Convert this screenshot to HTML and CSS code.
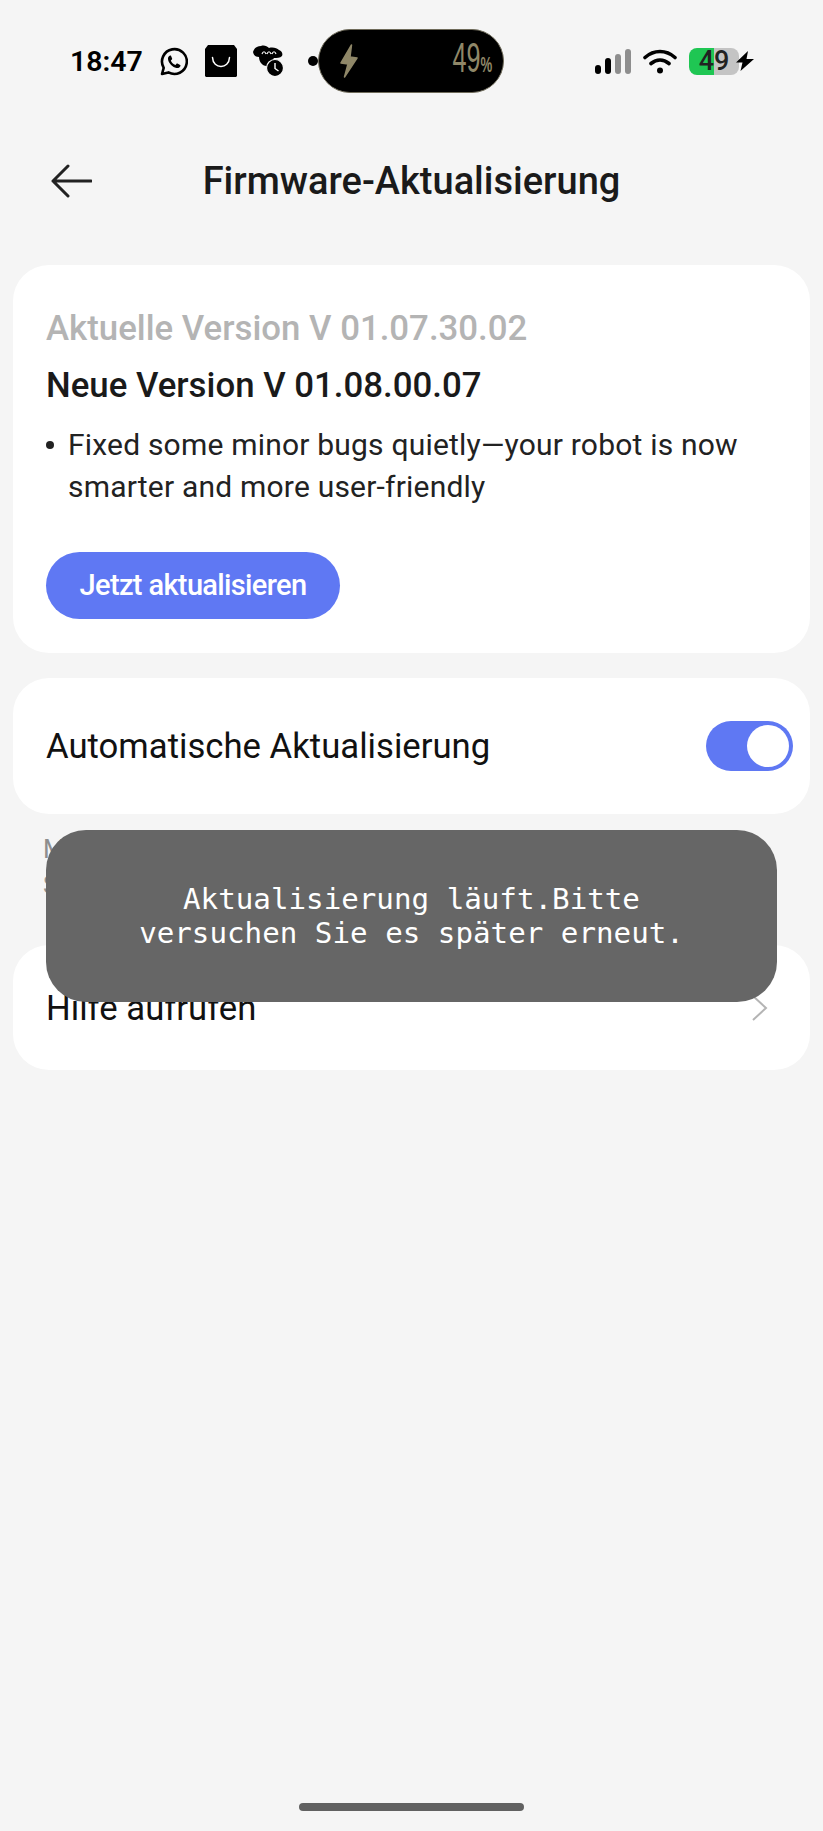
FILE: index.html
```html
<!DOCTYPE html>
<html lang="de">

<head>
  <meta charset="UTF-8">
  <meta name="viewport" content="width=device-width, initial-scale=1.0">
  <title>Firmware-Aktualisierung</title>
  <link rel="stylesheet" href="styles.css">
</head>

<body>
  <div id="app">
    <div id="statusbar">
      <span class="clock">18:47</span>
      <svg class="icon-whatsapp" viewBox="2 1 28 29" width="28" height="29">
        <path d="M4 28l1.700-6.200A12.400 12.400 0 1 1 10.400 26.400z" fill="none" stroke="#000" stroke-width="2.600" stroke-linejoin="round"/>
        <path d="M12 9.500c-1.500.6-2.300 2.300-1.900 4.200.8 3.700 4.500 7.500 8.300 8.300 1.900.4 3.500-.5 4.100-2 .2-.5 0-.9-.4-1.100l-2.600-1.300c-.4-.2-.8-.1-1 .2l-1 1.200c-2.300-.8-3.900-2.400-4.700-4.600l1.100-1c.3-.3.400-.7.200-1l-1.100-2.600c-.2-.4-.6-.5-1-.3z" fill="#000"/>
      </svg>
      <svg class="icon-bag" viewBox="0 0 32 32" width="32" height="32">
        <path d="M3 0h26l3 4v27l-1 1H1l-1-1V4z" fill="#000"/>
        <path d="M7.500 12.500c.5 12 16.500 12 17 0" fill="none" stroke="#fff" stroke-width="1.500" stroke-linecap="round"/>
      </svg>
      <svg class="icon-robot" viewBox="0 0 32 32" width="32" height="32">
        <path d="M1 7c1-4 4-6 8-6 3-1 6 0 8 2 4-1 8 0 10 2 3 1 4 4 3 6-2 2-5 2-8 2-2 2-3 5-4 7-3 2-7 1-9-2-1-1-2-4-2-6-3 0-5-1-6-5z" fill="#000"/>
        <path d="M10 9c1-3 3-3 4 0M15 9c1-3 3-3 4 0M20 9c1-3 3-3 4 0" fill="none" stroke="#f5f5f5" stroke-width="1.200"/>
        <circle cx="23" cy="23" r="8.500" fill="#000" stroke="#f5f5f5" stroke-width="1.200"/>
        <path d="M23 18v5.500l3.500 2.500" fill="none" stroke="#fff" stroke-width="1.400"/>
      </svg>
      <span class="dot"></span>
      <div class="island">
        <svg viewBox="0 0 20 34" width="20" height="34">
          <path d="M12.500 1L2 19l7 1-3.500 13L18 14l-7-1z" fill="#8f8768" stroke="#8f8768" stroke-width="1.500" stroke-linejoin="round"/>
        </svg>
        <span class="island-pct">49<small>%</small></span>
      </div>
      <span class="signal">
        <i class="bar bar-1"></i>
        <i class="bar bar-2"></i>
        <i class="bar bar-3"></i>
        <i class="bar bar-4"></i>
      </span>
      <svg class="icon-wifi" viewBox="0 0 34 26" width="34" height="26">
        <path d="M2 9.500c9-8 21-8 30 0M8 15.500c5.500-4.500 12.500-4.500 18 0" fill="none" stroke="#000" stroke-width="3.600" stroke-linecap="round"/>
        <circle cx="17" cy="22.500" r="3" fill="#000"/>
      </svg>
      <span class="battery">49</span>
      <svg class="icon-charge" viewBox="0 0 18 20" width="18" height="20">
        <path d="M12 0L0 11.500h6.500L4.500 20 18 8h-7.500z" fill="#000"/>
      </svg>
    </div>

    <div id="titlebar">
      <svg class="icon-back" viewBox="0 0 42 34" width="42" height="34">
        <path d="M41 17H3M18 2L3 17l15 15" fill="none" stroke="#222" stroke-width="3" stroke-linecap="round" stroke-linejoin="round"/>
      </svg>
      <h1>Firmware-Aktualisierung</h1>
    </div>

    <div class="card card-version">
      <p class="version-old">Aktuelle Version V 01.07.30.02</p>
      <p class="version-new">Neue Version V 01.08.00.07</p>
      <ul class="notes">
        <li>Fixed some minor bugs quietly—your robot is now smarter and more user-friendly</li>
      </ul>
      <button class="update-button">Jetzt aktualisieren</button>
    </div>

    <div class="card card-row card-auto">
      <span>Automatische Aktualisierung</span>
      <span class="toggle"><span class="knob"></span></span>
    </div>

    <div class="hint">
      <p>Manuelle Aktualisierung</p>
      <p>Support</p>
    </div>

    <div class="card card-row card-help">
      <span>Hilfe aufrufen</span>
      <svg class="icon-chevron" viewBox="0 0 18 28" width="18" height="28">
        <path d="M2 2l13 12L2 26" fill="none" stroke="#b4b4b4" stroke-width="2"/>
      </svg>
    </div>

    <div class="home-bar"></div>

    <div id="toast">Aktualisierung läuft.Bitte<br>versuchen Sie es später erneut.</div>
  </div>
</body>

</html>
```

FILE: styles.css
```css
:root {
    --page: #f5f5f5;
    --accent: #5f78f3;
    --text: #1a1a1a;
}

html,
body {
    height: 100%;
    padding: 0;
    margin: 0;
}

body {
    background-color: var(--page);
    font-family: Roboto, "Liberation Sans", sans-serif;
    overflow: hidden;
}

#app {
    position: relative;
    display: flex;
    flex-direction: column;
    height: 1831px;
    box-sizing: border-box;
    padding: 0 13px;
}

#statusbar {
    display: flex;
    align-items: center;
    height: 64px;
    margin-top: 29px;
    padding-left: 57px;
}

.clock {
    flex: none;
    width: 71px;
    font-size: 28.500px;
    font-weight: 600;
    color: #000;
    white-space: nowrap;
}

.icon-whatsapp {
    flex: none;
    margin-left: 19px;
}

.icon-bag {
    flex: none;
    margin-left: 17px;
}

.icon-robot {
    flex: none;
    margin-left: 15px;
}

.dot {
    flex: none;
    width: 10px;
    height: 10px;
    margin-left: 24px;
    border-radius: 50%;
    background-color: #000;
}

.island {
    display: flex;
    justify-content: space-between;
    align-items: center;
    box-sizing: border-box;
    flex: none;
    width: 186px;
    height: 64px;
    padding: 0 11px 0 20px;
    background-color: #000;
    border: 1px solid #6f6b5a;
    border-radius: 32px;
}

.island-pct {
    font-family: "Liberation Sans", sans-serif;
    font-size: 42px;
    line-height: 46px;
    color: #8f8768;
    transform: scaleX(.6);
    transform-origin: right center;
    white-space: nowrap;
}

.island-pct small {
    font-size: 22px;
    font-weight: bold;
}

.signal {
    display: flex;
    flex: none;
    align-items: flex-end;
    gap: 4px;
    height: 25px;
    margin-left: 91px;
}

.bar {
    display: block;
    width: 6px;
    border-radius: 3px;
    background-color: #000;
}

.bar-1 {
    height: 9px;
}

.bar-2 {
    height: 16px;
}

.bar-3 {
    height: 20px;
    background-color: #8e8e8e;
}

.bar-4 {
    height: 25px;
    background-color: #8e8e8e;
}

.icon-wifi {
    flex: none;
    margin-left: 12px;
}

.battery {
    flex: none;
    width: 50px;
    height: 27px;
    margin-left: 12px;
    border-radius: 8px;
    background: linear-gradient(to right, #1fc653 50%, #c4c4c4 50%);
    font-size: 27px;
    font-weight: 500;
    line-height: 27px;
    text-align: center;
    color: #222;
}

.icon-charge {
    flex: none;
    margin-left: -3px;
}

#titlebar {
    display: grid;
    grid-template-columns: 1fr auto 1fr;
    align-items: center;
    height: 44px;
    margin-top: 66px;
    margin-bottom: 62px;
}

.icon-back {
    margin-left: 37px;
}

h1 {
    margin: 0;
    font-size: 38px;
    font-weight: 500;
    color: var(--text);
}

.card {
    flex: none;
    box-sizing: border-box;
    background-color: #fff;
    border-radius: 36px;
}

.card-version {
    height: 388px;
    padding: 43px 33px 0;
    margin-bottom: 25px;
}

.card p {
    margin: 0;
}

.version-old {
    font-size: 34.800px;
    font-weight: 500;
    line-height: 40px;
    color: #b4b4b4;
}

.card .version-new {
    margin-top: 17px;
    font-size: 34.800px;
    font-weight: 500;
    line-height: 40px;
    color: var(--text);
}

.notes {
    margin: 19px 0 0;
    padding: 0;
    list-style: none;
    font-size: 30px;
    letter-spacing: .2px;
    line-height: 42px;
    color: #222;
}

.notes li {
    display: flex;
}

.notes li::before {
    content: "";
    flex: none;
    width: 8px;
    height: 8px;
    margin: 17px 14px 0 0;
    border-radius: 50%;
    background-color: #222;
}

.update-button {
    display: block;
    width: 294px;
    height: 67px;
    margin-top: 44px;
    padding: 0 0 2px;
    border: none;
    border-radius: 34px;
    background-color: var(--accent);
    color: #fff;
    font-family: Roboto, sans-serif;
    font-size: 29px;
    font-weight: 500;
    letter-spacing: -.65px;
}

.card-row {
    display: flex;
    justify-content: space-between;
    align-items: center;
    padding: 0 17px 0 33px;
    font-size: 34.700px;
    color: #111;
}

.card-auto {
    height: 136px;
}

.toggle {
    display: flex;
    justify-content: flex-end;
    align-items: center;
    box-sizing: border-box;
    width: 87px;
    height: 50px;
    padding-right: 4px;
    border-radius: 25px;
    background-color: var(--accent);
}

.knob {
    width: 42px;
    height: 42px;
    border-radius: 50%;
    background-color: #fff;
}

.hint {
    flex: none;
    box-sizing: border-box;
    height: 131px;
    padding: 17px 30px 0;
    font-size: 26px;
    line-height: 36px;
    color: #8e8e8e;
}

.hint p {
    margin: 0;
}

.card-help {
    height: 125px;
    padding-right: 41px;
}

.home-bar {
    position: absolute;
    left: 299px;
    bottom: 20px;
    width: 225px;
    height: 8px;
    border-radius: 4px;
    background-color: #616161;
}

#toast {
    position: absolute;
    top: 830px;
    left: 46px;
    box-sizing: border-box;
    width: 731px;
    height: 172px;
    padding-top: 52px;
    background-color: #666;
    border-radius: 40px;
    color: #fff;
    font-family: "DejaVu Sans Mono", monospace;
    font-size: 29.200px;
    line-height: 34px;
    text-align: center;
}
```
